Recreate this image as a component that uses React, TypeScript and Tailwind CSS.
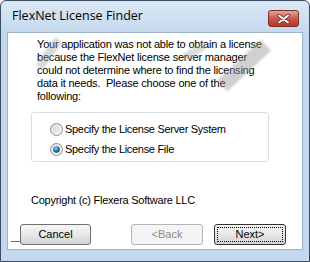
import React from "react";

const sysFont = { fontFamily: '"Liberation Sans", Arial, sans-serif' };

function Radio({ checked }: { checked?: boolean }) {
  return (
    <svg width="13" height="13" viewBox="0 0 13 13" className="shrink-0">
      <defs>
        <linearGradient id={checked ? "rgc" : "rgu"} x1="0" y1="0" x2="1" y2="1">
          <stop offset="0" stopColor="#d0d0d0" />
          <stop offset="1" stopColor="#f6f6f6" />
        </linearGradient>
        <radialGradient id="dot" cx="0.4" cy="0.35" r="0.7">
          <stop offset="0" stopColor="#9fdcf5" />
          <stop offset="0.5" stopColor="#1f7fb7" />
          <stop offset="1" stopColor="#10456e" />
        </radialGradient>
      </defs>
      <circle cx="6.5" cy="6.5" r="6" fill={`url(#${checked ? "rgc" : "rgu"})`} stroke="#8e8f8f" strokeWidth="1" />
      <circle cx="6.5" cy="6.5" r="4.5" fill="none" stroke="#f4f4f4" strokeWidth="1" />
      {checked && <circle cx="6.5" cy="6.5" r="3.3" fill="url(#dot)" />}
    </svg>
  );
}

export default function App() {
  return (
    <div className="w-[310px] h-[262px] overflow-hidden bg-white relative">
      <div className="w-[310px] h-[262px] flex flex-col rounded-t-[6px] border border-[#3a4d63] bg-[#c3d7ed]">
        {/* Title bar */}
        <div className="h-[31px] shrink-0 flex items-start bg-gradient-to-b from-[#dbe8f6] to-[#c5d9ee] rounded-t-[6px]">
          <div
            className="pl-[11px] pt-[7px] text-[12.5px] text-black leading-[16px]"
            style={{ fontFamily: '"Open Sans", "Noto Sans", sans-serif' }}
          >
            FlexNet License Finder
          </div>
          <div className="ml-auto mr-[10px] mt-[9px] w-[31px] h-[17px] rounded-[3px] border border-[#7b2f2a] bg-gradient-to-b from-[#e3a597] via-[#c9584a] to-[#b9382b] flex items-center justify-center">
            <svg width="13" height="10" viewBox="0 0 13 10">
              <path d="M2 1.5 L11 8.5 M11 1.5 L2 8.5" stroke="#5a1d16" strokeWidth="3.4" strokeLinecap="round" />
              <path d="M2 1.5 L11 8.5 M11 1.5 L2 8.5" stroke="#ffffff" strokeWidth="2" strokeLinecap="round" />
            </svg>
          </div>
        </div>
        {/* middle */}
        <div className="flex-1 flex px-[6px]">
          <div className="flex-1 bg-white border border-[#9fb5cc] flex flex-col" style={sysFont}>
            <div className="pl-[29px] pt-[5px] text-[11px] leading-[13px] text-black tracking-[-0.2px]">
              Your application was not able to obtain a license
              <br />
              because the FlexNet license server manager
              <br />
              could not determine where to find the licensing
              <br />
              data it needs.&nbsp; Please choose one of the
              <br />
              following:
            </div>
            <div className="ml-[23px] mt-[9px] w-[238px] h-[50px] rounded-[3px] border border-[#d5dfe5] flex flex-col pl-[18px] pt-[10px] gap-[7px]">
              <div className="flex items-center gap-[2px] text-[11px] leading-[13px] tracking-[-0.3px]">
                <Radio />
                <span>Specify the License Server System</span>
              </div>
              <div className="flex items-center gap-[2px] text-[11px] leading-[13px] tracking-[-0.3px]">
                <Radio checked />
                <span>Specify the License File</span>
              </div>
            </div>
            <div className="ml-[23px] mt-[32px] text-[11px] leading-[13px] tracking-[-0.25px]">
              Copyright (c) Flexera Software LLC
            </div>
            <div className="flex items-end mt-[17px]">
              <div className="w-[9px] h-[1px] bg-[#6b6b6b] mb-[3px] ml-[3px]" />
              <button className="w-[71px] h-[21px] rounded-[3px] border border-[#707070] bg-gradient-to-b from-[#f6f6f6] via-[#e8e8e8] to-[#d2d2d2] text-[11px] text-black">
                Cancel
              </button>
              <button className="ml-[40px] w-[72px] h-[21px] rounded-[3px] border border-[#b5b5b5] bg-[#f4f4f4] text-[11px] text-[#8a8a8a]">
                &lt;Back
              </button>
              <button className="ml-[11px] w-[72px] h-[21px] rounded-[3px] border border-[#333] bg-gradient-to-b from-[#f6f6f6] via-[#e8e8e8] to-[#d2d2d2] text-[11px] text-black p-[2px]">
                <div className="w-full h-full border border-dotted border-black flex items-center justify-center">Next&gt;</div>
              </button>
            </div>
          </div>
        </div>
        <div className="h-[11px] shrink-0" />
      </div>
      {/* faint watermark streaks over the picture */}
      <div className="absolute left-[32px] top-[49px] w-[34px] h-[9px] bg-[#a0a0a0] opacity-40 blur-[1px] -rotate-[55deg] pointer-events-none" />
      <div className="absolute left-[183px] top-[47px] w-[24px] h-[8px] bg-[#a8a8a8] opacity-40 blur-[1px] -rotate-[32deg] pointer-events-none" />
      <div className="absolute left-[214px] top-[58px] w-[60px] h-[15px] bg-[#999999] opacity-45 blur-[1px] -rotate-[43deg] pointer-events-none" />
    </div>
  );
}
